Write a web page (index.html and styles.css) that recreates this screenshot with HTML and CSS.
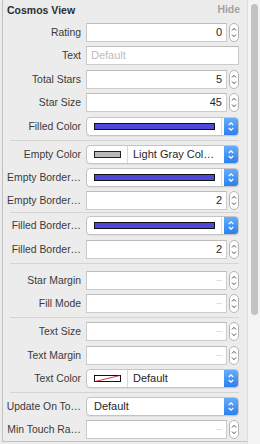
FILE: index.html
```html
<!DOCTYPE html>
<html lang="en">
<head>
    <meta charset="UTF-8">
    <meta name="viewport" content="width=device-width, initial-scale=1.0">
    <title>Cosmos View</title>
    <link rel="stylesheet" href="styles.css">
</head>
<body>
    <svg class="defs" width="0" height="0">
        <symbol id="stepper" viewBox="0 0 10 19">
            <rect x="0.5" y="0.5" width="9" height="18" rx="4.5" fill="#fff" stroke="#b5b5b5"/>
            <path d="M3 7.5 L5 5.3 L7 7.5" fill="none" stroke="#555" stroke-width="1"/>
            <path d="M3 11.5 L5 13.7 L7 11.5" fill="none" stroke="#555" stroke-width="1"/>
        </symbol>
        <symbol id="updown" viewBox="0 0 14 17">
            <path d="M4.8 7 L7 4.8 L9.2 7" fill="none" stroke="#fff" stroke-width="1.3"/>
            <path d="M4.8 10 L7 12.2 L9.2 10" fill="none" stroke="#fff" stroke-width="1.3"/>
        </symbol>
    </svg>

    <div class="inspector">
        <div class="panel">
            <div class="head">
                <span class="title">Cosmos View</span>
                <span class="hide">Hide</span>
            </div>

            <div class="group">
                <div class="row">
                    <label>Rating</label>
                    <div class="num"><div class="field">0</div><svg class="step"><use href="#stepper"/></svg></div>
                </div>
                <div class="row">
                    <label>Text</label>
                    <div class="field placeholder">Default</div>
                </div>
                <div class="row">
                    <label>Total Stars</label>
                    <div class="num"><div class="field">5</div><svg class="step"><use href="#stepper"/></svg></div>
                </div>
                <div class="row">
                    <label>Star Size</label>
                    <div class="num"><div class="field">45</div><svg class="step"><use href="#stepper"/></svg></div>
                </div>
                <div class="row">
                    <label>Filled Color</label>
                    <div class="popup">
                        <div class="well wide"><span class="bar"></span></div>
                        <span class="arrows"><svg><use href="#updown"/></svg></span>
                    </div>
                </div>
            </div>
            <div class="sep"></div>

            <div class="group tight-bottom">
                <div class="row">
                    <label>Empty Color</label>
                    <div class="popup">
                        <div class="well"><span class="chip gray"></span></div>
                        <span class="choice">Light Gray Col…</span>
                        <span class="arrows"><svg><use href="#updown"/></svg></span>
                    </div>
                </div>
                <div class="row">
                    <label>Empty Border…</label>
                    <div class="popup">
                        <div class="well wide"><span class="bar"></span></div>
                        <span class="arrows"><svg><use href="#updown"/></svg></span>
                    </div>
                </div>
                <div class="row">
                    <label>Empty Border…</label>
                    <div class="num"><div class="field">2</div><svg class="step"><use href="#stepper"/></svg></div>
                </div>
            </div>
            <div class="sep"></div>

            <div class="group tight-top">
                <div class="row">
                    <label>Filled Border…</label>
                    <div class="popup">
                        <div class="well wide"><span class="bar"></span></div>
                        <span class="arrows"><svg><use href="#updown"/></svg></span>
                    </div>
                </div>
                <div class="row">
                    <label>Filled Border…</label>
                    <div class="num"><div class="field">2</div><svg class="step"><use href="#stepper"/></svg></div>
                </div>
            </div>
            <div class="sep"></div>

            <div class="group loose-top">
                <div class="row">
                    <label>Star Margin</label>
                    <div class="num"><div class="field dash">--</div><svg class="step"><use href="#stepper"/></svg></div>
                </div>
                <div class="row">
                    <label>Fill Mode</label>
                    <div class="num"><div class="field dash">--</div><svg class="step"><use href="#stepper"/></svg></div>
                </div>
            </div>
            <div class="sep"></div>

            <div class="group">
                <div class="row">
                    <label>Text Size</label>
                    <div class="num"><div class="field dash">--</div><svg class="step"><use href="#stepper"/></svg></div>
                </div>
                <div class="row">
                    <label>Text Margin</label>
                    <div class="num"><div class="field dash">--</div><svg class="step"><use href="#stepper"/></svg></div>
                </div>
                <div class="row">
                    <label>Text Color</label>
                    <div class="popup">
                        <div class="well">
                            <svg class="chip" viewBox="0 0 27 7" preserveAspectRatio="none">
                                <rect x="0.5" y="0.5" width="26" height="6" fill="#fff" stroke="#111"/>
                                <path d="M1 6.5 L26 0.5" stroke="#d0021b" stroke-width="0.8"/>
                            </svg>
                        </div>
                        <span class="choice">Default</span>
                        <span class="arrows"><svg><use href="#updown"/></svg></span>
                    </div>
                </div>
            </div>
            <div class="sep"></div>

            <div class="group">
                <div class="row">
                    <label>Update On To…</label>
                    <div class="popup">
                        <span class="choice solo">Default</span>
                        <span class="arrows"><svg><use href="#updown"/></svg></span>
                    </div>
                </div>
                <div class="row">
                    <label>Min Touch Ra…</label>
                    <div class="num"><div class="field dash">--</div><svg class="step"><use href="#stepper"/></svg></div>
                </div>
            </div>
        </div>

        <div class="scroll">
            <div class="thumb"></div>
        </div>
    </div>
</body>
</html>
```

FILE: styles.css
```css
body {
    margin: 0;
    background-color: #ececec;
    font-family: "Liberation Sans", Arial, sans-serif;
    font-size: 10.4px;
    color: #333;
}

.defs {
    position: absolute;
}

.inspector {
    display: flex;
    height: 444px;
}

.panel {
    width: 245px;
    height: 442px;
    margin-left: 2px;
    box-sizing: border-box;
    border-left: 1px solid #c2c2c2;
    border-bottom: 1px solid #c2c2c2;
}

.head {
    display: flex;
    justify-content: space-between;
    align-items: center;
    height: 19px;
    padding: 0 7px 0 4px;
    font-weight: bold;
}
.title {
    font-size: 10.5px;
    color: #2e2e2e;
}
.hide {
    color: #a2a2a2;
}

.group {
    display: flex;
    flex-direction: column;
    gap: 4.4px;
    padding: 4px 0 4px;
}
.group.tight-bottom {
    padding-bottom: 2px;
}
.group.tight-top {
    padding-top: 3px;
}
.group.loose-top {
    padding-top: 7px;
}

.sep {
    height: 1px;
    margin: 0 8px 0 7px;
    background-color: #d4d4d4;
}

.row {
    display: grid;
    grid-template-columns: 78px 1fr;
    column-gap: 5px;
    align-items: center;
    height: 19px;
    padding-right: 8px;
}
.row label {
    text-align: right;
    white-space: nowrap;
    overflow: hidden;
    color: #3a3a3a;
}

.num {
    display: flex;
    gap: 2px;
}
.step {
    width: 10px;
    height: 19px;
    flex: none;
}

.field {
    flex: 1;
    height: 19px;
    box-sizing: border-box;
    padding: 0 4px;
    background-color: #fff;
    border: 1px solid #cbcbcb;
    border-top-color: #bcbcbc;
    line-height: 17px;
    font-size: 11px;
    text-align: right;
    color: #1f1f1f;
}
.field.placeholder {
    text-align: left;
    color: #bdbdbd;
}
.field.dash {
    font-size: 9px;
    color: #cfcfcf;
}

.popup {
    display: flex;
    align-items: stretch;
    height: 19px;
    box-sizing: border-box;
    background-color: #fff;
    border: 1px solid #c4c4c4;
    border-radius: 4px;
    overflow: hidden;
    box-shadow: 0 1px 0 rgba(0, 0, 0, 0.05);
}
.well {
    display: flex;
    align-items: center;
    padding: 0 6px 0 7px;
    border-right: 1px solid #d8d8d8;
}
.well.wide {
    flex: 1;
    margin-right: 2px;
}
.bar {
    flex: 1;
    height: 7px;
    box-sizing: border-box;
    border: 1px solid #111;
    background-color: #4f47d6;
}
.chip {
    display: block;
    width: 27px;
    height: 7px;
    box-sizing: border-box;
}
.chip.gray {
    border: 1px solid #222;
    background-color: #b9b9b9;
}
.choice {
    flex: 1;
    padding-left: 5px;
    line-height: 17px;
    font-size: 11px;
    color: #1f1f1f;
    white-space: nowrap;
}
.choice.solo {
    padding-left: 7px;
}
.arrows {
    width: 14px;
    flex: none;
    background: linear-gradient(#66acfb, #2a80f1);
}
.arrows svg {
    display: block;
    width: 14px;
    height: 17px;
}

.scroll {
    flex: 1;
    padding: 4px 0 0 3px;
    background-color: #f4f4f4;
    border-left: 1px solid #dcdcdc;
}
.thumb {
    width: 7px;
    height: 311px;
    border-radius: 4px;
    background-color: #c2c2c2;
}
```
